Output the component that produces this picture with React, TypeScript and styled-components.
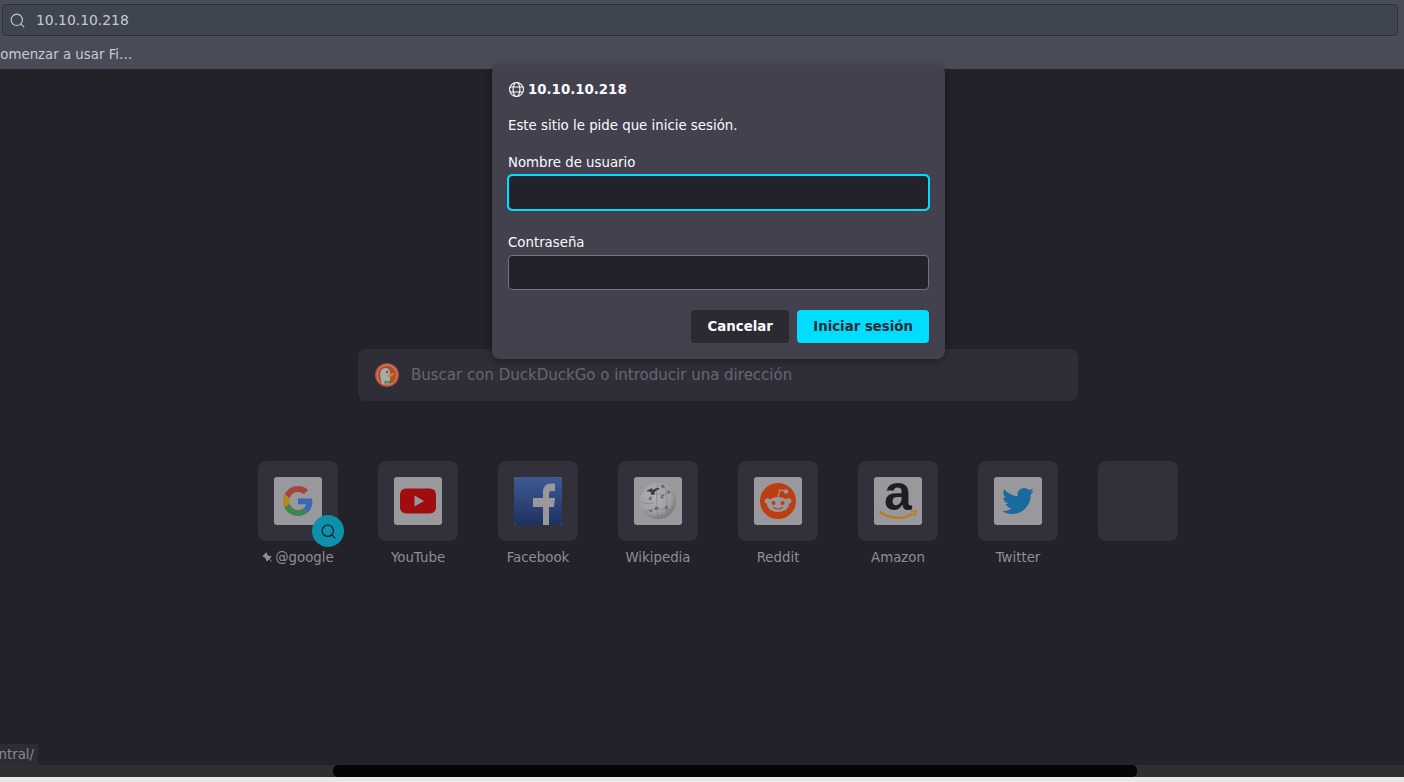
import React from 'react';
import styled, {createGlobalStyle} from 'styled-components';
import {Search} from 'lucide-react';
import {FaTwitter} from 'react-icons/fa';
import {BsPinAngleFill} from 'react-icons/bs';

const Global = createGlobalStyle`
  html, body {
    margin: 0;
    padding: 0;
    background: #23222b;
    font-family: "DejaVu Sans", sans-serif;
    overflow: hidden;
  }
  * { box-sizing: border-box; }
`;

const Page = styled.div`
  position: relative;
  width: 1404px;
  height: 782px;
  display: flex;
  flex-direction: column;
  overflow: hidden;
`;

const Chrome = styled.header`
  height: 69px;
  background: #494c58;
  padding: 4px 6px 0 2px;
  overflow: hidden;
`;

const UrlBar = styled.div`
  height: 32px;
  display: flex;
  align-items: center;
  gap: 10px;
  padding-left: 6px;
  background: #3f4451;
  border: 1px solid #2e323e;
  border-radius: 4px;
  color: #c8cad0;
  font-size: 13.9px;
`;

const Bookmarks = styled.div`
  height: 32px;
  display: flex;
  align-items: center;
  padding-top: 4px;
  margin-left: -11px;
  font-size: 13.33px;
  color: #c8cad0;
  white-space: nowrap;
`;

const Main = styled.main`
  flex: 1;
  display: flex;
  flex-direction: column;
  align-items: center;
  padding: 280px 0 0 32px;
`;

const SearchBox = styled.div`
  width: 720px;
  height: 52px;
  display: flex;
  align-items: center;
  gap: 12px;
  padding-left: 17px;
  background: #2f2e38;
  border-radius: 8px;
  color: #676670;
  font-size: 15px;
`;

const Tiles = styled.div`
  display: flex;
  gap: 40px;
  margin-top: 60px;
`;

const Tile = styled.div`
  width: 80px;
  display: flex;
  flex-direction: column;
  align-items: center;
`;

const TileBox = styled.div`
  position: relative;
  width: 80px;
  height: 80px;
  display: flex;
  align-items: center;
  justify-content: center;
  background: #32313b;
  border-radius: 8px;
`;

const Favicon = styled.div`
  width: 48px;
  height: 48px;
  display: flex;
  align-items: center;
  justify-content: center;
  border-radius: 3px;
  overflow: hidden;
  background: #99989d;
`;

const SearchBadge = styled.div`
  position: absolute;
  right: -6px;
  bottom: -6px;
  width: 32px;
  height: 32px;
  display: flex;
  align-items: center;
  justify-content: center;
  border-radius: 50%;
  background: #0e90ab;
  color: #14222c;
`;

const TileLabel = styled.div`
  display: flex;
  align-items: center;
  gap: 2px;
  margin-top: 8px;
  height: 16px;
  font-size: 13.33px;
  color: #8e8e96;
  white-space: nowrap;
`;

const Status = styled.div`
  position: absolute;
  left: 0;
  bottom: 17px;
  width: 38px;
  height: 21px;
  display: flex;
  align-items: center;
  justify-content: flex-end;
  padding-right: 4px;
  overflow: hidden;
  background: #2c2b36;
  color: #8a8a92;
  font-size: 13.33px;
`;

const Strip = styled.div`
  height: 12px;
  padding-left: 333px;
  background: #2f2f2f;
`;

const StripImage = styled.div`
  width: 804px;
  height: 12px;
  background: #050505;
  border-radius: 5px;
`;

const PageEnd = styled.div`
  height: 5px;
  background: #e7e8e9;
`;

const Dialog = styled.div`
  position: absolute;
  left: 492px;
  top: 65px;
  width: 453px;
  height: 294px;
  padding: 15px 16px 16px 16px;
  background: #42414d;
  border-radius: 8px;
  box-shadow: 0 2px 10px rgba(0, 0, 0, 0.35);
  color: #fbfbfe;
  font-size: 13.33px;
`;

const DialogTitle = styled.div`
  display: flex;
  align-items: center;
  gap: 3px;
  height: 18px;
  font-weight: 700;
`;

const DialogText = styled.div`
  margin-top: 19px;
  height: 18px;
  line-height: 18px;
`;

const FieldLabel = styled.label<{$gap: number}>`
  display: block;
  margin-top: ${p => p.$gap}px;
  height: 18px;
  line-height: 18px;
`;

const Field = styled.input<{$focused?: boolean}>`
  display: block;
  width: 421px;
  height: 35px;
  margin-top: 3px;
  background: #23222b;
  border-radius: 4px;
  outline: none;
  border: 1px solid #74737c;
  ${p => p.$focused && `
    outline: 2px solid #00ddff;
    outline-offset: -1px;
    border-color: #00ddff;
  `}
`;

const Actions = styled.div`
  display: flex;
  justify-content: flex-end;
  gap: 8px;
  margin-top: 20px;
`;

const Button = styled.button<{$primary?: boolean}>`
  height: 33px;
  min-width: 98px;
  padding: 0 16px;
  border: none;
  border-radius: 4px;
  font-family: inherit;
  font-size: 13.33px;
  font-weight: 700;
  background: ${p => (p.$primary ? '#00ddff' : '#2b2a33')};
  color: ${p => (p.$primary ? '#2b2a33' : '#fbfbfe')};
`;

const GlobeIcon = () => (
    <svg width="17" height="17" viewBox="0 0 17 17" fill="none" stroke="#fbfbfe" strokeWidth="1.1">
        <circle cx="8.5" cy="8.5" r="7" />
        <ellipse cx="8.5" cy="8.5" rx="3.4" ry="7" />
        <path d="M2 6h13M2 11h13" />
    </svg>
);

const DuckIcon = () => (
    <svg width="24" height="24" viewBox="0 0 24 24">
        <circle cx="12" cy="12" r="12" fill="#b04e2e" />
        <circle cx="12" cy="12" r="10" fill="none" stroke="#cfa294" strokeWidth="0.8" />
        <path d="M7 21c-1-5-2.500-8-1.500-12C6.500 5.500 10 4.200 12.500 5.500c2 1 2.500 3 2.800 5.500l-.5 10z" fill="#a9a8ac" />
        <circle cx="12" cy="9" r="1" fill="#3c3b44" />
        <path d="M12.500 11.500l7-1.500-1 2-3 1.500-3 .5z" fill="#c98a22" />
        <path d="M9.500 17.500l3 1 3-1v3.500l-3-1-3 1z" fill="#4d8a3a" />
    </svg>
);

const GoogleIcon = () => (
    <svg width="30" height="30" viewBox="0 0 48 48">
        <path fill="#a5463c" d="M24 9.500c3.540 0 6.710 1.220 9.210 3.600l6.850-6.850C35.900 2.380 30.470 0 24 0 14.620 0 6.510 5.380 2.560 13.220l7.980 6.190C12.430 13.720 17.740 9.500 24 9.500z" />
        <path fill="#3a68b4" d="M46.980 24.550c0-1.570-.15-3.090-.38-4.550H24v9.020h12.940c-.58 2.960-2.260 5.480-4.780 7.180l7.730 6c4.510-4.180 7.090-10.360 7.090-17.650z" />
        <path fill="#b08a1e" d="M10.530 28.590c-.48-1.450-.76-2.990-.76-4.590s.27-3.140.76-4.590l-7.980-6.190C.92 16.460 0 20.120 0 24c0 3.880.92 7.540 2.560 10.780l7.970-6.190z" />
        <path fill="#3f8550" d="M24 48c6.480 0 11.930-2.130 15.890-5.810l-7.730-6c-2.150 1.450-4.920 2.300-8.160 2.300-6.260 0-11.570-4.220-13.470-9.910l-7.980 6.190C6.510 42.620 14.620 48 24 48z" />
    </svg>
);

const YouTubeIcon = () => (
    <svg width="48" height="48" viewBox="0 0 48 48">
        <rect x="6" y="11.500" width="36" height="25" rx="6" fill="#a00d10" />
        <path d="M20.500 18.500l9.500 5.500-9.500 5.500z" fill="#99989d" />
    </svg>
);

const FacebookIcon = () => (
    <svg width="48" height="48" viewBox="0 0 48 48">
        <defs>
            <linearGradient id="fb" x1="0" y1="0" x2="0" y2="1">
                <stop offset="0" stopColor="#3f5b94" />
                <stop offset="1" stopColor="#1e3062" />
            </linearGradient>
        </defs>
        <rect width="48" height="48" fill="url(#fb)" />
        <path d="M29 48V30H19v-9h10v-6c0-5.500 3.300-8.500 8.500-8.500 1.500 0 2.800.1 3.500.2V14h-3c-2.300 0-3 1-3 3v4h6l-1 9h-5v18z" fill="#99989d" />
    </svg>
);

const WikipediaIcon = () => (
    <svg width="48" height="48" viewBox="0 0 48 48">
        <defs>
            <radialGradient id="wk" cx="0.4" cy="0.35" r="0.72">
                <stop offset="0" stopColor="#b2b1b4" />
                <stop offset="0.65" stopColor="#a09fa3" />
                <stop offset="1" stopColor="#707074" />
            </radialGradient>
        </defs>
        <circle cx="24" cy="24" r="18" fill="url(#wk)" />
        <path d="M12 14l6-3 .5 2 5-2.500 2.500 1.500-4.500 2-1.500 4-3.500-.5.500-2.500z" fill="#3e3d42" />
        <path d="M27 8l3 .5.500 2-2.500.5zM34 13l2 2-1 2-1.500-2zM15 20h3v1h-3v2h3M27 18h3v1h-3v2h3M15 33l3 .5v1.500l-2.500-.5zM31 29h3v1h-3v2h3M21 30h3v2.500h-3z" fill="#66656a" stroke="#66656a" strokeWidth="0.4" />
        <path d="M7 25c5 2 9 2 13 .5M24 7c-2 8-2 16 0 34M31 9c2 10 3 19 1 31M10 34c8-2 18-2.500 28-1M39 15c-6 2-12 2.500-19 2" fill="none" stroke="#78777c" strokeWidth="0.5" />
    </svg>
);

const RedditIcon = () => (
    <svg width="48" height="48" viewBox="0 0 48 48">
        <circle cx="24" cy="24" r="18" fill="#bd3f10" />
        <circle cx="13.500" cy="24" r="2.800" fill="#99989d" />
        <circle cx="34.500" cy="24" r="2.800" fill="#99989d" />
        <ellipse cx="24" cy="27.500" rx="11" ry="7.500" fill="#99989d" />
        <path d="M24 20.500l1.700-7.500 5.500 1.200" fill="none" stroke="#99989d" strokeWidth="1.200" />
        <circle cx="32" cy="14.500" r="2.200" fill="#99989d" />
        <circle cx="19.500" cy="26" r="2" fill="#bd3f10" />
        <circle cx="28.500" cy="26" r="2" fill="#bd3f10" />
        <path d="M19.500 30.500c2.500 2 6.500 2 9 0" fill="none" stroke="#bd3f10" strokeWidth="1.200" strokeLinecap="round" />
    </svg>
);

const AmazonIcon = () => (
    <svg width="48" height="48" viewBox="0 0 48 48">
        <text x="24" y="33" textAnchor="middle" fontFamily="Liberation Sans" fontWeight="700" fontSize="50" fill="#1e1e20">a</text>
        <path d="M6 35c9 6.500 23 8 32 2" fill="none" stroke="#bb7d14" strokeWidth="2.200" strokeLinecap="round" />
        <path d="M37 34.500l5-.5-1.500 5" fill="none" stroke="#bb7d14" strokeWidth="1.800" />
    </svg>
);

const SITES = [
    {label: 'YouTube', icon: <YouTubeIcon />},
    {label: 'Facebook', icon: <FacebookIcon />},
    {label: 'Wikipedia', icon: <WikipediaIcon />},
    {label: 'Reddit', icon: <RedditIcon />},
    {label: 'Amazon', icon: <AmazonIcon />},
    {label: 'Twitter', icon: <FaTwitter size={32} color="#1a6a9e" />},
];

const App = () => {
    return (
        <Page>
            <Global />
            <Chrome>
                <UrlBar>
                    <Search size={17} strokeWidth={1.5} />
                    10.10.10.218
                </UrlBar>
                <Bookmarks>Comenzar a usar Fi…</Bookmarks>
            </Chrome>
            <Main>
                <SearchBox>
                    <DuckIcon />
                    Buscar con DuckDuckGo o introducir una dirección
                </SearchBox>
                <Tiles>
                    <Tile>
                        <TileBox>
                            <Favicon><GoogleIcon /></Favicon>
                            <SearchBadge><Search size={17} strokeWidth={1.8} /></SearchBadge>
                        </TileBox>
                        <TileLabel>
                            <BsPinAngleFill size={11} style={{transform: 'scaleX(-1)'}} />
                            @google
                        </TileLabel>
                    </Tile>
                    {SITES.map(site => (
                        <Tile key={site.label}>
                            <TileBox><Favicon>{site.icon}</Favicon></TileBox>
                            <TileLabel>{site.label}</TileLabel>
                        </Tile>
                    ))}
                    <Tile><TileBox /></Tile>
                </Tiles>
            </Main>
            <Status>ntral/</Status>
            <Strip><StripImage /></Strip>
            <PageEnd />
            <Dialog>
                <DialogTitle><GlobeIcon />10.10.10.218</DialogTitle>
                <DialogText>Este sitio le pide que inicie sesión.</DialogText>
                <FieldLabel $gap={19}>Nombre de usuario</FieldLabel>
                <Field $focused readOnly />
                <FieldLabel $gap={24}>Contraseña</FieldLabel>
                <Field type="password" readOnly />
                <Actions>
                    <Button>Cancelar</Button>
                    <Button $primary>Iniciar sesión</Button>
                </Actions>
            </Dialog>
        </Page>
    );
};

export default App;
